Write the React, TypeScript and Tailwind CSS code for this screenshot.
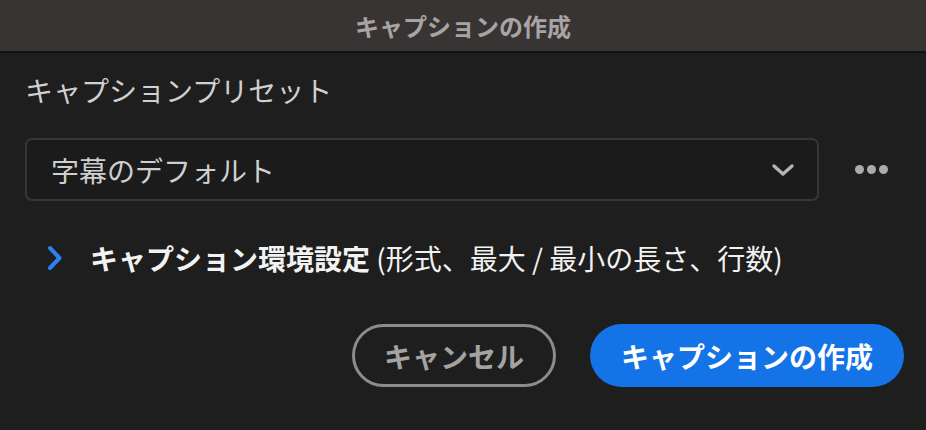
import React from "react";

const font = { fontFamily: '"Noto Sans CJK JP", "Noto Sans", sans-serif' };

export default function App() {
  return (
    <div className="w-[926px] h-[430px] bg-[#1e1e1e] flex flex-col overflow-hidden" style={font}>
      <div className="h-[53px] shrink-0 bg-[#393434] border-b-2 border-[#111111] flex items-center justify-center">
        <span className="text-[24px] leading-[30px] font-bold text-[#a9a4a4]">キャプションの作成</span>
      </div>
      <div className="flex flex-col pl-[25px] pr-[22px]">
        <div className="mt-[19px] text-[28px] leading-[36px] text-[#d0d0d0]">キャプションプリセット</div>
        <div className="mt-[30px] flex items-center">
          <div className="w-[794px] h-[63px] rounded-[7px] border-2 border-[#363636] bg-[#1b1b1b] flex items-center justify-between pl-[24px] pr-[22px]">
            <span className="text-[28px] leading-[36px] text-[#cfcfcf]">字幕のデフォルト</span>
            <svg width="24" height="16" viewBox="0 0 24 16" fill="none">
              <path d="M3 4 L12 12 L21 4" stroke="#b4b4b4" strokeWidth="3.4" strokeLinecap="round" strokeLinejoin="round" />
            </svg>
          </div>
          <div className="ml-[36px] flex items-center gap-[3px]">
            <span className="w-[9px] h-[9px] rounded-full bg-[#ababab]" />
            <span className="w-[9px] h-[9px] rounded-full bg-[#ababab]" />
            <span className="w-[9px] h-[9px] rounded-full bg-[#ababab]" />
          </div>
        </div>
        <div className="mt-[39px] flex items-center pl-[21px]">
          <svg width="18" height="26" viewBox="0 0 18 26" fill="none">
            <path d="M4 3 L13.5 13 L4 23" stroke="#2b82ee" strokeWidth="4" strokeLinecap="round" strokeLinejoin="round" />
          </svg>
          <span className="ml-[26px] text-[28px] leading-[36px] text-[#f2f2f2] whitespace-nowrap">
            <span className="font-bold">キャプション環境設定</span> (形式、最大 / 最小の長さ、行数)
          </span>
        </div>
        <div className="mt-[48px] flex justify-end gap-[34px]">
          <button className="h-[63px] rounded-full border-[3px] border-[#8c8c8c] px-[29px] text-[28px] leading-[36px] font-bold text-[#a3a3a3]">キャンセル</button>
          <button className="h-[63px] rounded-full bg-[#1473e6] px-[31px] text-[28px] leading-[36px] font-bold text-white">キャプションの作成</button>
        </div>
      </div>
    </div>
  );
}
